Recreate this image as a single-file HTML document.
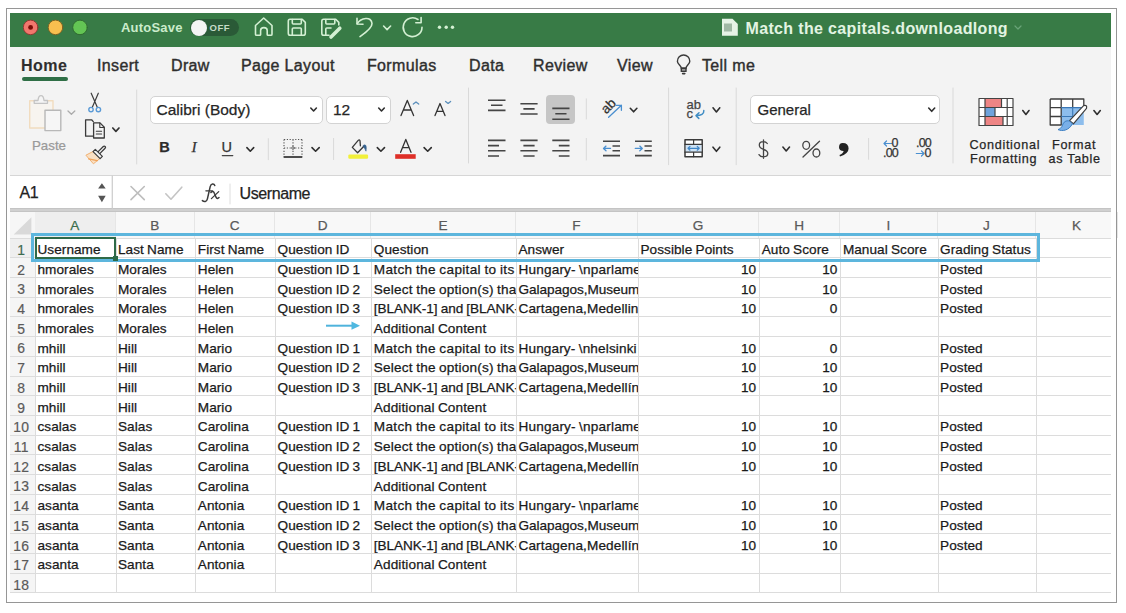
<!DOCTYPE html><html><head><meta charset="utf-8"><style>*{margin:0;padding:0;box-sizing:border-box}
html,body{width:1126px;height:613px;overflow:hidden;background:#fff;font-family:"Liberation Sans",sans-serif;position:relative}
#frame{position:absolute;left:6px;top:8px;width:1111px;height:595px;border:1px solid #969696}
.abs{position:absolute}
#title{position:absolute;left:10px;top:13px;width:1101px;height:33.5px;background:#387b46}
#ribbon{position:absolute;left:10px;top:46.5px;width:1101px;height:129px;background:#f3f3f3;border-bottom:1px solid #d6d6d6}
#fbar{position:absolute;left:10px;top:175.5px;width:1101px;height:32.5px;background:#fff}
#fbarline{position:absolute;left:10px;top:208px;width:1101px;height:3.8px;background:#d0d0d0;border-top:1px solid #c4c4c4;border-bottom:1px solid #c4c4c4}
.tab{position:absolute;top:56px;font-size:16px;color:#2e2e2e;-webkit-text-stroke:0.4px #2e2e2e;letter-spacing:0.35px;line-height:20px;white-space:nowrap}
#grid{position:absolute;left:0;top:0}
#colhdr{position:absolute;background:#f8f8f8}
.corner{position:absolute;left:10px;top:212px;width:25px;height:26.3px;background:#f6f6f6}
.ch{position:absolute;top:212px;height:26.3px;line-height:27px;text-align:center;font-size:13.6px;color:#5a5a5a;-webkit-text-stroke:0.25px #5a5a5a;border-right:1px solid #e6e6e6}
.ch.sel{background:#eeeeee;color:#3b6e4c;-webkit-text-stroke:0.25px #3b6e4c}
.rh{position:absolute;left:10px;width:25px;text-align:center;font-size:13.9px;letter-spacing:0.3px;color:#5a5a5a;-webkit-text-stroke:0.2px #5a5a5a;line-height:20px;background:#f5f5f5;padding-top:2.3px;padding-right:2.3px}
.rh.sel{color:#3b6e4c;background:#efefef}
.hl{position:absolute;left:10px;width:1101px;height:1px;background:#dcdcdc}
.vl{position:absolute;top:238.3px;width:1px;height:354.5px;background:#dcdcdc}
.c{position:absolute;overflow:hidden;-webkit-text-stroke:0.25px #1a1a1a;white-space:nowrap;font-size:13.6px;color:#1a1a1a;letter-spacing:0.05px;word-spacing:-0.6px;line-height:22px;padding-left:2.5px;padding-top:1.5px}
.c.num{text-align:right;padding-left:0;padding-right:3px}
#bluebox{position:absolute;left:31px;top:232.6px;width:1009px;height:29.6px;border:3.5px solid #5db6dd}
#selbox{position:absolute;left:35px;top:236.7px;width:81px;height:22.3px;border:2px solid #2e6a48}
#handle{position:absolute;left:113px;top:256px;width:5px;height:5px;background:#2e6a48}
.box{position:absolute;background:#fff;border:1px solid #d3d3d3;border-radius:5px}
.rt{position:absolute;color:#262626;-webkit-text-stroke:0.25px;line-height:20px;white-space:nowrap}
</style></head><body><div id="frame"></div><div id="title"></div>
<div id="ribbon"></div>
<div id="fbar"></div>
<div id="fbarline"></div>
<!-- title text -->
<div class="abs" style="left:121px;top:20px;font-size:13px;font-weight:bold;color:#cbeccb;line-height:16px;letter-spacing:0.2px;white-space:nowrap">AutoSave</div>
<div class="abs" style="left:190px;top:19px;width:48.5px;height:17px;border-radius:8.5px;background:#2a5a37"></div>
<div class="abs" style="left:190.5px;top:19.5px;width:16px;height:16px;border-radius:8px;background:#f4f4f4"></div>
<div class="abs" style="left:209.5px;top:21.5px;font-size:9.5px;font-weight:bold;color:#c6dcc8;line-height:12px;letter-spacing:0.5px">OFF</div>
<div class="abs" style="left:745.5px;top:18.5px;font-size:16px;font-weight:bold;color:#e2f4e2;line-height:20px;letter-spacing:0.35px;white-space:nowrap">Match the capitals.downloadlong</div>
<div class="tab" style="left:21px;font-weight:bold;letter-spacing:0.45px;-webkit-text-stroke:0.1px">Home</div>
<div class="tab" style="left:97px">Insert</div>
<div class="tab" style="left:171px">Draw</div>
<div class="tab" style="left:241px">Page Layout</div>
<div class="tab" style="left:367px">Formulas</div>
<div class="tab" style="left:469px">Data</div>
<div class="tab" style="left:533px">Review</div>
<div class="tab" style="left:617px">View</div>
<div class="tab" style="left:702px">Tell me</div>
<div class="abs" style="left:21.5px;top:77.3px;width:46px;height:4px;border-radius:2px;background:#2f6f46"></div>
<!-- ribbon boxes -->
<div class="box" style="left:149.7px;top:95.5px;width:173px;height:28.7px"></div>
<div class="box" style="left:325.7px;top:95.5px;width:65.5px;height:28.7px"></div>
<div class="box" style="left:749.8px;top:95.4px;width:190.5px;height:28.7px"></div>
<div class="abs" style="left:546.3px;top:95.2px;width:29.2px;height:28.8px;border-radius:4px;background:#c6c6c6"></div>
<div class="rt" style="left:156.5px;top:100px;font-size:15.5px">Calibri (Body)</div>
<div class="rt" style="left:333px;top:100px;font-size:15.5px">12</div>
<div class="rt" style="left:757.5px;top:100px;font-size:15px">General</div>
<div class="rt" style="left:32px;top:135.5px;font-size:13.3px;color:#9a9a9a">Paste</div>
<div class="rt" style="left:969.5px;top:139px;font-size:12.6px;letter-spacing:0.7px;line-height:13px">Conditional</div>
<div class="rt" style="left:970px;top:153px;font-size:12.6px;letter-spacing:0.7px;line-height:13px">Formatting</div>
<div class="rt" style="left:1052px;top:139px;font-size:12.6px;letter-spacing:0.7px;line-height:13px">Format</div>
<div class="rt" style="left:1048.5px;top:153px;font-size:12.6px;letter-spacing:0.7px;line-height:13px">as Table</div>
<div class="rt" style="left:19.5px;top:183.1px;font-size:16px;letter-spacing:-0.3px;color:#222">A1</div>
<div class="rt" style="left:239.5px;top:183.8px;font-size:16px;letter-spacing:-0.4px;color:#222">Username</div>
<svg class="abs" style="left:0;top:0" width="1126" height="613" viewBox="0 0 1126 613">
<g fill="none" stroke-linecap="round" stroke-linejoin="round">
 <!-- traffic lights -->
 <circle cx="30.6" cy="27.4" r="7.3" fill="#f2776d" stroke="#8d3b33" stroke-width="1"/>
 <circle cx="30.6" cy="27.4" r="2.4" fill="#7c0d08"/>
 <circle cx="55.5" cy="27.4" r="7.3" fill="#f8bf4f" stroke="#7c6323" stroke-width="1"/>
 <circle cx="80" cy="27.4" r="7.3" fill="#63c554" stroke="#2f6a30" stroke-width="1"/>
 <!-- title icons -->
 <g stroke="#d4f0d3" stroke-width="1.6">
  <path d="M255.5 25.5 L263.7 18 L272 25.5 L272 34.2 Q272 35.3 270.9 35.3 L268 35.3 Q267.2 35.3 267.2 34.5 L267.2 30.5 Q267.2 27.6 263.9 27.6 Q260.6 27.6 260.6 30.5 L260.6 34.5 Q260.6 35.3 259.8 35.3 L256.6 35.3 Q255.5 35.3 255.5 34.2 Z"/>
  <path d="M290 19.3 L302.2 19.3 L305.3 22.4 L305.3 33.2 Q305.3 35.3 303.2 35.3 L290.3 35.3 Q288.3 35.3 288.3 33.2 L288.3 21.3 Q288.3 19.3 290 19.3 Z"/>
  <path d="M292.3 19.5 L292.3 23 Q292.3 24 293.3 24 L300.3 24 Q301.3 24 301.3 23 L301.3 19.5"/>
  <path d="M292.3 35 L292.3 29 Q292.3 28 293.3 28 L300.3 28 Q301.3 28 301.3 29 L301.3 35"/>
  <path d="M329 35.3 L323.8 35.3 Q321.8 35.3 321.8 33.2 L321.8 21.3 Q321.8 19.3 323.6 19.3 L335.7 19.3 L338.8 22.4 L338.8 25"/>
  <path d="M325.8 19.5 L325.8 23 Q325.8 24 326.8 24 L333.8 24 Q334.8 24 334.8 23 L334.8 19.5"/>
  <path d="M325.8 35 L325.8 29 Q325.8 28 326.8 28 L331 28"/>
  <path d="M357 18.2 L357 24 L363 24.3"/>
  <path d="M357.3 23.7 C 361 17.5 371.5 16 372 23.5 C 372.3 27 368 31 360 36.6"/>
  <path d="M383.6 26 L387.1 29.6 L390.6 26"/>
  <path d="M422 27.2 A 9.4 9.4 0 1 1 418 19.5"/>
  <path d="M421.1 17.6 L421.1 22.7 L415.8 22.7"/>
 </g>
 <path d="M331 37 L339.8 28.2" stroke="#d4f0d3" stroke-width="3.6"/>
 <circle cx="439.5" cy="27.3" r="1.7" fill="#d4f0d3"/>
 <circle cx="446.2" cy="27.3" r="1.7" fill="#d4f0d3"/>
 <circle cx="452.5" cy="27.3" r="1.7" fill="#d4f0d3"/>
 <!-- doc icon in title -->
 <path d="M722 18.8 L732.5 18.8 L737.8 24 L737.8 35.8 L722 35.8 Z" fill="#e6f3e6"/>
 <rect x="724" y="23.5" width="8" height="8" fill="#9fb8a4"/>
 <path d="M1015 26 L1018 29 L1021 26" stroke="#6aa479" stroke-width="1.2"/>
</g>
</svg>
<svg class="abs" style="left:0;top:0" width="1126" height="613" viewBox="0 0 1126 613">
<g fill="none" stroke-linecap="round" stroke-linejoin="round">
 <!-- separators -->
 <g stroke="#d9d9d9" stroke-width="1">
  <path d="M136.7 90 V164"/>
  <path d="M468.5 88 V163"/>
  <path d="M268.3 138.6 V159.7"/>
  <path d="M333.6 138.4 V159.6"/>
  <path d="M586.3 98.8 V119"/>
  <path d="M586.3 138.4 V160"/>
  <path d="M668.6 88 V164.7"/>
  <path d="M736.2 88 V164.7"/>
  <path d="M868.6 138.4 V159.3"/>
  <path d="M953 88 V163"/>
 </g>
 <!-- paste -->
 <path d="M29.7 100.8 H53 V128 H29.7 Z" stroke="#f1dcbf" stroke-width="1.4" fill="#f7f4ef"/>
 <path d="M34.2 103.3 V100.5 H38 Q38.5 95.6 41 95.6 Q43.5 95.6 44 100.5 H47.5 V103.3 Z" stroke="#c4c4c4" stroke-width="1.3" fill="#f5f5f5"/>
 <rect x="45" y="110.3" width="15.8" height="20.3" stroke="#b8b8b8" stroke-width="1.4" fill="#f6f6f6"/>
 <path d="M68 111 L71.4 114.3 L74.8 111" stroke="#ababab" stroke-width="1.3"/>
 <!-- scissors -->
 <path d="M91.2 93.2 L97.3 107.3 M98.3 93.2 L92.3 107.3" stroke="#3c3c3c" stroke-width="1.2"/>
 <circle cx="91" cy="109.6" r="2.2" stroke="#5a9ad6" stroke-width="1.4"/>
 <circle cx="98.4" cy="109.6" r="2.2" stroke="#5a9ad6" stroke-width="1.4"/>
 <!-- copy -->
 <path d="M93.2 136.2 H85.6 V119.8 H91.6 L93.3 121.6" stroke="#3a3a3a" stroke-width="1.3"/>
 <path d="M93.6 122.9 H100 L104.3 127.2 V138 H93.6 Z" stroke="#3a3a3a" stroke-width="1.3"/>
 <path d="M99.8 123 V127.5 H104" stroke="#3a3a3a" stroke-width="1.1"/>
 <path d="M96.3 131.2 H101.6 M96.3 134 H101.6" stroke="#3a3a3a" stroke-width="1.1"/>
 <path d="M112.8 128 L115.9 131.3 L119 128" stroke="#333" stroke-width="1.7"/>
 <!-- format painter -->
 <path d="M93.6 151.2 L85.9 155.2 L93.4 163.8 L100.8 157.8 Z" fill="#f9e0c4" stroke="#f2b273" stroke-width="1"/>
 <path d="M88.6 158.8 L97.3 160.6" stroke="#f0a35a" stroke-width="1.3"/>
 <path d="M98.6 153 L104.2 147.4" stroke="#3a3a3a" stroke-width="3.8"/>
 <path d="M98.6 153 L104.2 147.4" stroke="#f2f2f2" stroke-width="1.3"/>
 <path d="M93.03 151.59 L95.29 149.33 L102.37 156.41 L100.11 158.67 Z" fill="#f2f2f2" stroke="#3a3a3a" stroke-width="1.2"/>
 <!-- combo chevrons -->
 <g stroke="#2f2f2f" stroke-width="1.6">
  <path d="M310.8 108 L313.6 111 L316.4 108"/>
  <path d="M378.7 108 L381.5 111 L384.3 108"/>
  <path d="M928.7 108 L931.7 111.3 L934.7 108"/>
  <path d="M246.9 147.6 L250.3 151.2 L253.7 147.6"/>
  <path d="M312 147.6 L315.6 151.2 L319.2 147.6"/>
  <path d="M377.3 147.6 L380.9 151.2 L384.5 147.6"/>
  <path d="M424.1 147.6 L427.7 151.2 L431.3 147.6"/>
  <path d="M630.3 108.3 L633.6 111.8 L636.9 108.3"/>
  <path d="M713 107.8 L716.4 111.9 L719.8 107.8"/>
  <path d="M713 147.2 L716.4 151.3 L719.8 147.2"/>
  <path d="M782.9 147 L786.2 150.9 L789.5 147"/>
  <path d="M1022.8 110.5 L1025.9 114.5 L1029 110.5"/>
  <path d="M1093.9 110.5 L1097.1 114.5 L1100.3 110.5"/>
 </g>
 <!-- grow/shrink font -->
 <path d="M401 115.6 L407.3 100.4 L413.6 115.6 M403.3 110 H411.3" stroke="#333" stroke-width="1.3"/>
 <path d="M413.3 104 L416 101.9 L418.7 104" stroke="#5b8fbb" stroke-width="1.3"/>
 <path d="M435 115.6 L440 103.5 L445 115.6 M436.9 111.3 H443.1" stroke="#333" stroke-width="1.3"/>
 <path d="M445.6 101.4 L448.1 103.4 L450.6 101.4" stroke="#5b8fbb" stroke-width="1.3"/>
 <!-- underline bar -->
 <path d="M222.3 155.6 H232.8" stroke="#444" stroke-width="1.2"/>
 <!-- borders -->
 <g stroke="#555" stroke-width="1.1" stroke-dasharray="1.2 1.6" stroke-linecap="butt">
  <path d="M284 139.5 H302 M284 139.5 V156.6 M302 139.5 V156.6 M284 148 H302 M293 139.5 V156.6"/>
 </g>
 <circle cx="293" cy="148" r="1.3" stroke="#555" stroke-width="0.9" fill="#f3f3f3"/>
 <path d="M283.6 157 H302.3" stroke="#3a3a3a" stroke-width="1.8" stroke-linecap="butt"/>
 <!-- fill bucket -->
 <path d="M360.4 145.8 L360 140.8 Q359.4 139.2 358.2 140.4 L352.3 147.4 L357.6 152.8 L364.4 145.8" stroke="#383838" stroke-width="1.3"/>
 <path d="M363.6 145.2 Q366.3 143.8 366.3 147.8 L366 151.2 Q365 148.6 363.4 146.8 Z" fill="#34618f" stroke="#34618f" stroke-width="0.6"/>
 <rect x="348.3" y="154.6" width="19.8" height="4.2" rx="1.2" fill="#f1f03a"/>
 <!-- font color A -->
 <path d="M400.6 152.3 L405.8 139.4 L411 152.3 M402.6 147.6 H409" stroke="#333" stroke-width="1.3"/>
 <rect x="395.2" y="154.2" width="20.5" height="4.6" fill="#de2f27"/>
 <!-- align top -->
 <g stroke="#454545" stroke-width="1.6" stroke-linecap="butt">
  <path d="M488 100.2 H505.5 M491 105.3 H502.5 M488 110.4 H505.5"/>
  <path d="M520.4 103.7 H537.6 M523.4 108.9 H534.6 M520.4 114 H537.6"/>
  <path d="M552.3 108.4 H569.5 M555.3 113.8 H566.5 M552.3 119.2 H569.5"/>
  <path d="M488 140.4 H505.5 M488 145.6 H499 M488 150.8 H505.5 M488 156 H499"/>
  <path d="M520.4 140.4 H537.6 M523.4 145.6 H534.6 M520.4 150.8 H537.6 M523.4 156 H534.6"/>
  <path d="M552.3 140.4 H569.5 M558.8 145.6 H569.5 M552.3 150.8 H569.5 M558.8 156 H569.5"/>
  <path d="M603 141.2 H620 M612.5 146 H620 M612.5 150.8 H620 M603 155.6 H620"/>
  <path d="M635 141.2 H651.8 M644.5 146 H651.8 M644.5 150.8 H651.8 M635 155.6 H651.8"/>
 </g>
 <path d="M603.5 148.4 H610.5 M606 146.1 L603.5 148.4 L606 150.7" stroke="#4a8fd0" stroke-width="1.3"/>
 <path d="M635.3 148.4 H642.3 M639.8 146.1 L642.3 148.4 L639.8 150.7" stroke="#4a8fd0" stroke-width="1.3"/>
 <!-- orientation -->
 <path d="M608.6 117.2 L621.4 105.2 M616.5 105.4 H621.4 V110.3" stroke="#4a8fd0" stroke-width="1.3"/>
 <!-- wrap arrow -->
 <path d="M703.8 110.6 C704.2 114 701 115.6 696.4 115.6 M699 112.8 L696 115.6 L698.8 118.4" stroke="#3f8dc4" stroke-width="1.5"/>
 <!-- merge -->
 <rect x="685" y="139.7" width="17.2" height="17" stroke="#3a3a3a" stroke-width="1.5" fill="#fff"/>
 <rect x="685.8" y="144.6" width="15.6" height="7.4" fill="#cfe3f5" stroke="none"/>
 <path d="M685 144.4 H702.2 M685 152.2 H702.2 M693.6 139.7 V144.4 M693.6 152.2 V156.7" stroke="#3a3a3a" stroke-width="1.2"/>
 <path d="M688 148.3 H699.2 M690 146.4 L688 148.3 L690 150.2 M697.2 146.4 L699.2 148.3 L697.2 150.2" stroke="#3f86c7" stroke-width="1.2"/>
 <!-- CF icon -->
 <rect x="979" y="98.5" width="34" height="27" fill="#fff"/>
 <rect x="985" y="98.5" width="16.5" height="9" fill="#ee8585"/>
 <rect x="985" y="116.5" width="18" height="9" fill="#ee8585"/>
 <rect x="985" y="107.5" width="10" height="9" fill="#6fa3dc"/>
 <path d="M979 98.5 H1013 V125.5 H979 Z M979 107.5 H1013 M979 116.5 H1013 M985 98.5 V125.5 M1001.5 98.5 V107.5 M1003 116.5 V125.5 M995 107.5 V116.5 M1007.2 98.5 V125.5" stroke="#444" stroke-width="1.2"/>
 <!-- Format as table -->
 <rect x="1050.2" y="99" width="33.6" height="26" fill="#fff"/>
 <rect x="1061.2" y="107.6" width="22.6" height="17.4" fill="#8dbdec"/>
 <path d="M1050.2 99 H1083.8 V107.6 M1050.2 99 V125 H1061.2 V99 M1072.7 99 V107.6 M1050.2 107.6 H1061.2 M1050.2 116.5 H1061.2" stroke="#3e3e3e" stroke-width="1.3" stroke-linecap="butt"/>
 <path d="M1061.2 107.6 H1083.8 M1061.2 116.5 H1075 M1072.7 107.6 V118" stroke="#3b77b5" stroke-width="1.1" stroke-linecap="butt"/>
 <path d="M1083.6 105.6 Q1087.4 104.6 1086.5 108.4 L1073.4 123.8 L1069.6 120.6 Z" fill="#fff" stroke="#3e3e3e" stroke-width="1.2"/>
 <path d="M1069.3 121 C1066 120 1063.6 122 1062.6 125 C1061.6 128 1059.6 129 1058 129.6 C1062.2 131.6 1068.8 130.6 1072.2 124.2 Z" fill="#79afe8" stroke="#3e80c3" stroke-width="1"/>
 <!-- decimal arrows -->
 <path d="M884 143.5 H891.5 M886.5 141 L884 143.5 L886.5 146" stroke="#4a8fd0" stroke-width="1.2"/>
 <path d="M916.3 153.5 H924 M921.5 151 L924 153.5 L921.5 156" stroke="#4a8fd0" stroke-width="1.2"/>
 <!-- formula bar icons -->
 <path d="M131 186.5 L144.3 199.6 M144.3 186.5 L131 199.6" stroke="#bdbdbd" stroke-width="1.6"/>
 <path d="M165.8 193.8 L171 199.2 L181.8 187.2" stroke="#c4c4c4" stroke-width="1.6"/>
 <path d="M230 184 V204" stroke="#dedede" stroke-width="1"/>
 <path d="M112.3 176 V208" stroke="#cfcfcf" stroke-width="1.3"/>
 <path d="M101.9 183.2 L105.7 188.6 H98.1 Z M98.1 195.8 H105.7 L101.9 202.2 Z" fill="#555" stroke="none"/>
</g>
</svg>
<div class="rt" style="left:159.2px;top:137px;font-size:14.6px;font-weight:bold;color:#2b2b2b">B</div>
<div class="rt" style="left:191.5px;top:137px;font-size:15.5px;font-family:'Liberation Serif',serif;font-style:italic;color:#333">I</div>
<div class="rt" style="left:221.4px;top:137px;font-size:14.5px;color:#333">U</div>
<div class="rt" style="left:601px;top:96px;font-size:13.5px;color:#333;transform:rotate(-45deg);transform-origin:8px 10px">ab</div>
<div class="rt" style="left:686.5px;top:97.7px;font-size:13px;color:#444;line-height:14px">ab</div>
<div class="rt" style="left:686.5px;top:107px;font-size:13px;color:#444;line-height:14px">c</div>
<svg class="abs" style="left:0;top:0" width="1126" height="613" viewBox="0 0 1126 613"><g fill="none" stroke="#444" stroke-width="1.3" stroke-linecap="round">
<path d="M767.3 143.5 Q766 141.6 763.3 141.6 Q759.3 141.6 759.3 145 Q759.3 148 763.4 149.3 Q767.8 150.6 767.8 153.6 Q767.8 156.8 763.5 156.8 Q760.3 156.8 759 154.6 M763.5 139.8 V158.3"/>
<path d="M819.5 141.2 L803 157"/>
<ellipse cx="806.2" cy="145.3" rx="3.4" ry="4"/>
<ellipse cx="816.4" cy="153" rx="3.4" ry="4"/>
</g>
<path d="M842.7 143 Q848.6 143 848.6 148.6 Q848.6 153.8 840 156.5 L839.5 155 Q843.2 153.5 843.6 151 Q839 150.8 839 147.3 Q839 143 842.7 143 Z" fill="#222"/>
</svg>
<div class="rt" style="left:891.5px;top:137.5px;font-size:12.5px;color:#333;line-height:11px">0</div>
<div class="rt" style="left:883px;top:147.5px;font-size:12.5px;color:#333;line-height:11px;letter-spacing:-0.8px">.00</div>
<div class="rt" style="left:916px;top:137.5px;font-size:12.5px;color:#333;line-height:11px;letter-spacing:-0.8px">.00</div>
<div class="rt" style="left:924.5px;top:147.5px;font-size:12.5px;color:#333;line-height:11px">0</div>
<svg class="abs" style="left:0;top:0" width="1126" height="613" viewBox="0 0 1126 613"><g fill="none" stroke="#3a3a3a" stroke-width="1.4" stroke-linecap="round" stroke-linejoin="round">
<path d="M681.3 68.2 C681.3 65.6 677.4 64.4 677.4 61.2 A6.2 6.2 0 1 1 689.8 61.2 C689.8 64.4 686 65.6 686 68.2 Z"/>
<rect x="681.3" y="68.2" width="4.7" height="3.2" fill="#999"/>
<path d="M682.6 73.6 H684.8" stroke-width="1.6"/>
</g></svg>
<svg class="abs" style="left:0;top:0" width="1126" height="613" viewBox="0 0 1126 613"><g fill="none" stroke="#3c3c3c" stroke-linecap="round" stroke-linejoin="round">
<path d="M214.8 185.6 C214 183.4 211 183.4 210.2 186.6 L207.4 198.8 C206.7 201.8 204.2 202.2 202.4 200.6" stroke-width="1.5"/>
<path d="M205.9 190.8 H212.4" stroke-width="1.3"/>
<path d="M210.9 192.4 C212.6 190.6 213.7 191.4 214.6 193.8 L216 197.2 C216.8 198.8 218 198.8 219 197.6" stroke-width="1.5"/>
<path d="M218.7 191.6 L211.4 198.6" stroke-width="1.3"/>
</g></svg>
<div id="grid"><div id="colhdr" style="left:10px;top:212px;width:1101px;height:26.3px"></div><div class="corner"></div><svg class="abs" style="left:0;top:0" width="40" height="240"><path d="M13.7 234.6 L31.4 217.2 V234.6 Z" fill="#d9d9d9"/></svg><div class="ch sel" style="left:35px;width:80.5px">A</div><div class="ch" style="left:115.5px;width:79.80000000000001px">B</div><div class="ch" style="left:195.3px;width:79.80000000000001px">C</div><div class="ch" style="left:275.1px;width:96.19999999999999px">D</div><div class="ch" style="left:371.3px;width:144.7px">E</div><div class="ch" style="left:516px;width:122px">F</div><div class="ch" style="left:638px;width:121.20000000000005px">G</div><div class="ch" style="left:759.2px;width:81.19999999999993px">H</div><div class="ch" style="left:840.4px;width:97.20000000000005px">I</div><div class="ch" style="left:937.6px;width:98.39999999999998px">J</div><div class="ch" style="left:1036px;width:82px">K</div><div class="rh sel" style="top:237.60px;height:19.71px">1</div><div class="rh" style="top:257.31px;height:19.71px">2</div><div class="rh" style="top:277.02px;height:19.71px">3</div><div class="rh" style="top:296.73px;height:19.71px">4</div><div class="rh" style="top:316.44px;height:19.71px">5</div><div class="rh" style="top:336.15px;height:19.71px">6</div><div class="rh" style="top:355.86px;height:19.71px">7</div><div class="rh" style="top:375.57px;height:19.71px">8</div><div class="rh" style="top:395.28px;height:19.71px">9</div><div class="rh" style="top:414.99px;height:19.71px">10</div><div class="rh" style="top:434.70px;height:19.71px">11</div><div class="rh" style="top:454.41px;height:19.71px">12</div><div class="rh" style="top:474.12px;height:19.71px">13</div><div class="rh" style="top:493.83px;height:19.71px">14</div><div class="rh" style="top:513.54px;height:19.71px">15</div><div class="rh" style="top:533.25px;height:19.71px">16</div><div class="rh" style="top:552.96px;height:19.71px">17</div><div class="rh" style="top:572.67px;height:19.71px">18</div><div class="hl" style="top:237.60px"></div><div class="hl" style="top:257.31px"></div><div class="hl" style="top:277.02px"></div><div class="hl" style="top:296.73px"></div><div class="hl" style="top:316.44px"></div><div class="hl" style="top:336.15px"></div><div class="hl" style="top:355.86px"></div><div class="hl" style="top:375.57px"></div><div class="hl" style="top:395.28px"></div><div class="hl" style="top:414.99px"></div><div class="hl" style="top:434.70px"></div><div class="hl" style="top:454.41px"></div><div class="hl" style="top:474.12px"></div><div class="hl" style="top:493.83px"></div><div class="hl" style="top:513.54px"></div><div class="hl" style="top:533.25px"></div><div class="hl" style="top:552.96px"></div><div class="hl" style="top:572.67px"></div><div class="hl" style="top:592.38px"></div><div class="vl" style="left:35px"></div><div class="vl" style="left:115.5px"></div><div class="vl" style="left:195.3px"></div><div class="vl" style="left:275.1px"></div><div class="vl" style="left:371.3px"></div><div class="vl" style="left:516px"></div><div class="vl" style="left:638px"></div><div class="vl" style="left:759.2px"></div><div class="vl" style="left:840.4px"></div><div class="vl" style="left:937.6px"></div><div class="vl" style="left:1036px"></div><div class="c" style="left:35px;top:237.60px;width:80.5px;height:19.71px">Username</div><div class="c" style="left:115.5px;top:237.60px;width:79.80000000000001px;height:19.71px">Last Name</div><div class="c" style="left:195.3px;top:237.60px;width:79.80000000000001px;height:19.71px">First Name</div><div class="c" style="left:275.1px;top:237.60px;width:96.19999999999999px;height:19.71px">Question ID</div><div class="c e" style="left:371.3px;top:237.60px;width:144.7px;height:19.71px">Question</div><div class="c" style="left:516px;top:237.60px;width:122px;height:19.71px">Answer</div><div class="c" style="left:638px;top:237.60px;width:121.20000000000005px;height:19.71px">Possible Points</div><div class="c" style="left:759.2px;top:237.60px;width:81.19999999999993px;height:19.71px">Auto Score</div><div class="c" style="left:840.4px;top:237.60px;width:97.20000000000005px;height:19.71px">Manual Score</div><div class="c" style="left:937.6px;top:237.60px;width:98.39999999999998px;height:19.71px">Grading Status</div><div class="c" style="left:35px;top:257.31px;width:80.5px;height:19.71px">hmorales</div><div class="c" style="left:115.5px;top:257.31px;width:79.80000000000001px;height:19.71px">Morales</div><div class="c" style="left:195.3px;top:257.31px;width:79.80000000000001px;height:19.71px">Helen</div><div class="c" style="left:275.1px;top:257.31px;width:96.19999999999999px;height:19.71px">Question ID 1</div><div class="c e" style="left:371.3px;top:257.31px;width:144.7px;height:19.71px;letter-spacing:0.33px">Match the capital to its</div><div class="c" style="left:516px;top:257.31px;width:122px;height:19.71px;letter-spacing:0.17px">Hungary- \nparlament</div><div class="c num" style="left:638px;top:257.31px;width:121.20000000000005px;height:19.71px">10</div><div class="c num" style="left:759.2px;top:257.31px;width:81.19999999999993px;height:19.71px">10</div><div class="c" style="left:937.6px;top:257.31px;width:98.39999999999998px;height:19.71px">Posted</div><div class="c" style="left:35px;top:277.02px;width:80.5px;height:19.71px">hmorales</div><div class="c" style="left:115.5px;top:277.02px;width:79.80000000000001px;height:19.71px">Morales</div><div class="c" style="left:195.3px;top:277.02px;width:79.80000000000001px;height:19.71px">Helen</div><div class="c" style="left:275.1px;top:277.02px;width:96.19999999999999px;height:19.71px">Question ID 2</div><div class="c e" style="left:371.3px;top:277.02px;width:144.7px;height:19.71px;letter-spacing:0.2px">Select the option(s) tha</div><div class="c" style="left:516px;top:277.02px;width:122px;height:19.71px;letter-spacing:-0.06px">Galapagos,Museum</div><div class="c num" style="left:638px;top:277.02px;width:121.20000000000005px;height:19.71px">10</div><div class="c num" style="left:759.2px;top:277.02px;width:81.19999999999993px;height:19.71px">10</div><div class="c" style="left:937.6px;top:277.02px;width:98.39999999999998px;height:19.71px">Posted</div><div class="c" style="left:35px;top:296.73px;width:80.5px;height:19.71px">hmorales</div><div class="c" style="left:115.5px;top:296.73px;width:79.80000000000001px;height:19.71px">Morales</div><div class="c" style="left:195.3px;top:296.73px;width:79.80000000000001px;height:19.71px">Helen</div><div class="c" style="left:275.1px;top:296.73px;width:96.19999999999999px;height:19.71px">Question ID 3</div><div class="c e" style="left:371.3px;top:296.73px;width:144.7px;height:19.71px;letter-spacing:-0.05px">[BLANK-1] and [BLANK-2]</div><div class="c" style="left:516px;top:296.73px;width:122px;height:19.71px;letter-spacing:0.12px">Cartagena,Medellin</div><div class="c num" style="left:638px;top:296.73px;width:121.20000000000005px;height:19.71px">10</div><div class="c num" style="left:759.2px;top:296.73px;width:81.19999999999993px;height:19.71px">0</div><div class="c" style="left:937.6px;top:296.73px;width:98.39999999999998px;height:19.71px">Posted</div><div class="c" style="left:35px;top:316.44px;width:80.5px;height:19.71px">hmorales</div><div class="c" style="left:115.5px;top:316.44px;width:79.80000000000001px;height:19.71px">Morales</div><div class="c" style="left:195.3px;top:316.44px;width:79.80000000000001px;height:19.71px">Helen</div><div class="c e" style="left:371.3px;top:316.44px;width:144.7px;height:19.71px;letter-spacing:0.11px">Additional Content</div><div class="c" style="left:35px;top:336.15px;width:80.5px;height:19.71px">mhill</div><div class="c" style="left:115.5px;top:336.15px;width:79.80000000000001px;height:19.71px">Hill</div><div class="c" style="left:195.3px;top:336.15px;width:79.80000000000001px;height:19.71px">Mario</div><div class="c" style="left:275.1px;top:336.15px;width:96.19999999999999px;height:19.71px">Question ID 1</div><div class="c e" style="left:371.3px;top:336.15px;width:144.7px;height:19.71px;letter-spacing:0.33px">Match the capital to its</div><div class="c" style="left:516px;top:336.15px;width:122px;height:19.71px;letter-spacing:0.13px">Hungary- \nhelsinki</div><div class="c num" style="left:638px;top:336.15px;width:121.20000000000005px;height:19.71px">10</div><div class="c num" style="left:759.2px;top:336.15px;width:81.19999999999993px;height:19.71px">0</div><div class="c" style="left:937.6px;top:336.15px;width:98.39999999999998px;height:19.71px">Posted</div><div class="c" style="left:35px;top:355.86px;width:80.5px;height:19.71px">mhill</div><div class="c" style="left:115.5px;top:355.86px;width:79.80000000000001px;height:19.71px">Hill</div><div class="c" style="left:195.3px;top:355.86px;width:79.80000000000001px;height:19.71px">Mario</div><div class="c" style="left:275.1px;top:355.86px;width:96.19999999999999px;height:19.71px">Question ID 2</div><div class="c e" style="left:371.3px;top:355.86px;width:144.7px;height:19.71px;letter-spacing:0.2px">Select the option(s) tha</div><div class="c" style="left:516px;top:355.86px;width:122px;height:19.71px;letter-spacing:-0.06px">Galapagos,Museum</div><div class="c num" style="left:638px;top:355.86px;width:121.20000000000005px;height:19.71px">10</div><div class="c num" style="left:759.2px;top:355.86px;width:81.19999999999993px;height:19.71px">10</div><div class="c" style="left:937.6px;top:355.86px;width:98.39999999999998px;height:19.71px">Posted</div><div class="c" style="left:35px;top:375.57px;width:80.5px;height:19.71px">mhill</div><div class="c" style="left:115.5px;top:375.57px;width:79.80000000000001px;height:19.71px">Hill</div><div class="c" style="left:195.3px;top:375.57px;width:79.80000000000001px;height:19.71px">Mario</div><div class="c" style="left:275.1px;top:375.57px;width:96.19999999999999px;height:19.71px">Question ID 3</div><div class="c e" style="left:371.3px;top:375.57px;width:144.7px;height:19.71px;letter-spacing:-0.05px">[BLANK-1] and [BLANK-2]</div><div class="c" style="left:516px;top:375.57px;width:122px;height:19.71px;letter-spacing:0.12px">Cartagena,Medellín</div><div class="c num" style="left:638px;top:375.57px;width:121.20000000000005px;height:19.71px">10</div><div class="c num" style="left:759.2px;top:375.57px;width:81.19999999999993px;height:19.71px">10</div><div class="c" style="left:937.6px;top:375.57px;width:98.39999999999998px;height:19.71px">Posted</div><div class="c" style="left:35px;top:395.28px;width:80.5px;height:19.71px">mhill</div><div class="c" style="left:115.5px;top:395.28px;width:79.80000000000001px;height:19.71px">Hill</div><div class="c" style="left:195.3px;top:395.28px;width:79.80000000000001px;height:19.71px">Mario</div><div class="c e" style="left:371.3px;top:395.28px;width:144.7px;height:19.71px;letter-spacing:0.11px">Additional Content</div><div class="c" style="left:35px;top:414.99px;width:80.5px;height:19.71px">csalas</div><div class="c" style="left:115.5px;top:414.99px;width:79.80000000000001px;height:19.71px">Salas</div><div class="c" style="left:195.3px;top:414.99px;width:79.80000000000001px;height:19.71px">Carolina</div><div class="c" style="left:275.1px;top:414.99px;width:96.19999999999999px;height:19.71px">Question ID 1</div><div class="c e" style="left:371.3px;top:414.99px;width:144.7px;height:19.71px;letter-spacing:0.33px">Match the capital to its</div><div class="c" style="left:516px;top:414.99px;width:122px;height:19.71px;letter-spacing:0.17px">Hungary- \nparlament</div><div class="c num" style="left:638px;top:414.99px;width:121.20000000000005px;height:19.71px">10</div><div class="c num" style="left:759.2px;top:414.99px;width:81.19999999999993px;height:19.71px">10</div><div class="c" style="left:937.6px;top:414.99px;width:98.39999999999998px;height:19.71px">Posted</div><div class="c" style="left:35px;top:434.70px;width:80.5px;height:19.71px">csalas</div><div class="c" style="left:115.5px;top:434.70px;width:79.80000000000001px;height:19.71px">Salas</div><div class="c" style="left:195.3px;top:434.70px;width:79.80000000000001px;height:19.71px">Carolina</div><div class="c" style="left:275.1px;top:434.70px;width:96.19999999999999px;height:19.71px">Question ID 2</div><div class="c e" style="left:371.3px;top:434.70px;width:144.7px;height:19.71px;letter-spacing:0.2px">Select the option(s) tha</div><div class="c" style="left:516px;top:434.70px;width:122px;height:19.71px;letter-spacing:-0.06px">Galapagos,Museum</div><div class="c num" style="left:638px;top:434.70px;width:121.20000000000005px;height:19.71px">10</div><div class="c num" style="left:759.2px;top:434.70px;width:81.19999999999993px;height:19.71px">10</div><div class="c" style="left:937.6px;top:434.70px;width:98.39999999999998px;height:19.71px">Posted</div><div class="c" style="left:35px;top:454.41px;width:80.5px;height:19.71px">csalas</div><div class="c" style="left:115.5px;top:454.41px;width:79.80000000000001px;height:19.71px">Salas</div><div class="c" style="left:195.3px;top:454.41px;width:79.80000000000001px;height:19.71px">Carolina</div><div class="c" style="left:275.1px;top:454.41px;width:96.19999999999999px;height:19.71px">Question ID 3</div><div class="c e" style="left:371.3px;top:454.41px;width:144.7px;height:19.71px;letter-spacing:-0.05px">[BLANK-1] and [BLANK-2]</div><div class="c" style="left:516px;top:454.41px;width:122px;height:19.71px;letter-spacing:0.12px">Cartagena,Medellín</div><div class="c num" style="left:638px;top:454.41px;width:121.20000000000005px;height:19.71px">10</div><div class="c num" style="left:759.2px;top:454.41px;width:81.19999999999993px;height:19.71px">10</div><div class="c" style="left:937.6px;top:454.41px;width:98.39999999999998px;height:19.71px">Posted</div><div class="c" style="left:35px;top:474.12px;width:80.5px;height:19.71px">csalas</div><div class="c" style="left:115.5px;top:474.12px;width:79.80000000000001px;height:19.71px">Salas</div><div class="c" style="left:195.3px;top:474.12px;width:79.80000000000001px;height:19.71px">Carolina</div><div class="c e" style="left:371.3px;top:474.12px;width:144.7px;height:19.71px;letter-spacing:0.11px">Additional Content</div><div class="c" style="left:35px;top:493.83px;width:80.5px;height:19.71px">asanta</div><div class="c" style="left:115.5px;top:493.83px;width:79.80000000000001px;height:19.71px">Santa</div><div class="c" style="left:195.3px;top:493.83px;width:79.80000000000001px;height:19.71px">Antonia</div><div class="c" style="left:275.1px;top:493.83px;width:96.19999999999999px;height:19.71px">Question ID 1</div><div class="c e" style="left:371.3px;top:493.83px;width:144.7px;height:19.71px;letter-spacing:0.33px">Match the capital to its</div><div class="c" style="left:516px;top:493.83px;width:122px;height:19.71px;letter-spacing:0.17px">Hungary- \nparlament</div><div class="c num" style="left:638px;top:493.83px;width:121.20000000000005px;height:19.71px">10</div><div class="c num" style="left:759.2px;top:493.83px;width:81.19999999999993px;height:19.71px">10</div><div class="c" style="left:937.6px;top:493.83px;width:98.39999999999998px;height:19.71px">Posted</div><div class="c" style="left:35px;top:513.54px;width:80.5px;height:19.71px">asanta</div><div class="c" style="left:115.5px;top:513.54px;width:79.80000000000001px;height:19.71px">Santa</div><div class="c" style="left:195.3px;top:513.54px;width:79.80000000000001px;height:19.71px">Antonia</div><div class="c" style="left:275.1px;top:513.54px;width:96.19999999999999px;height:19.71px">Question ID 2</div><div class="c e" style="left:371.3px;top:513.54px;width:144.7px;height:19.71px;letter-spacing:0.2px">Select the option(s) tha</div><div class="c" style="left:516px;top:513.54px;width:122px;height:19.71px;letter-spacing:-0.06px">Galapagos,Museum</div><div class="c num" style="left:638px;top:513.54px;width:121.20000000000005px;height:19.71px">10</div><div class="c num" style="left:759.2px;top:513.54px;width:81.19999999999993px;height:19.71px">10</div><div class="c" style="left:937.6px;top:513.54px;width:98.39999999999998px;height:19.71px">Posted</div><div class="c" style="left:35px;top:533.25px;width:80.5px;height:19.71px">asanta</div><div class="c" style="left:115.5px;top:533.25px;width:79.80000000000001px;height:19.71px">Santa</div><div class="c" style="left:195.3px;top:533.25px;width:79.80000000000001px;height:19.71px">Antonia</div><div class="c" style="left:275.1px;top:533.25px;width:96.19999999999999px;height:19.71px">Question ID 3</div><div class="c e" style="left:371.3px;top:533.25px;width:144.7px;height:19.71px;letter-spacing:-0.05px">[BLANK-1] and [BLANK-2]</div><div class="c" style="left:516px;top:533.25px;width:122px;height:19.71px;letter-spacing:0.12px">Cartagena,Medellín</div><div class="c num" style="left:638px;top:533.25px;width:121.20000000000005px;height:19.71px">10</div><div class="c num" style="left:759.2px;top:533.25px;width:81.19999999999993px;height:19.71px">10</div><div class="c" style="left:937.6px;top:533.25px;width:98.39999999999998px;height:19.71px">Posted</div><div class="c" style="left:35px;top:552.96px;width:80.5px;height:19.71px">asanta</div><div class="c" style="left:115.5px;top:552.96px;width:79.80000000000001px;height:19.71px">Santa</div><div class="c" style="left:195.3px;top:552.96px;width:79.80000000000001px;height:19.71px">Antonia</div><div class="c e" style="left:371.3px;top:552.96px;width:144.7px;height:19.71px;letter-spacing:0.11px">Additional Content</div><svg class="arrow" style="position:absolute;left:320px;top:318px" width="45" height="16" viewBox="0 0 45 16"><line x1="6" y1="7.7" x2="33" y2="7.7" stroke="#4fb3dc" stroke-width="2"/><path d="M31.5 3.4 L40 7.7 L31.5 11.8 Z" fill="#4fb8e0"/></svg><div id="bluebox"></div><div id="selbox"></div><div id="handle"></div></div></body></html>
